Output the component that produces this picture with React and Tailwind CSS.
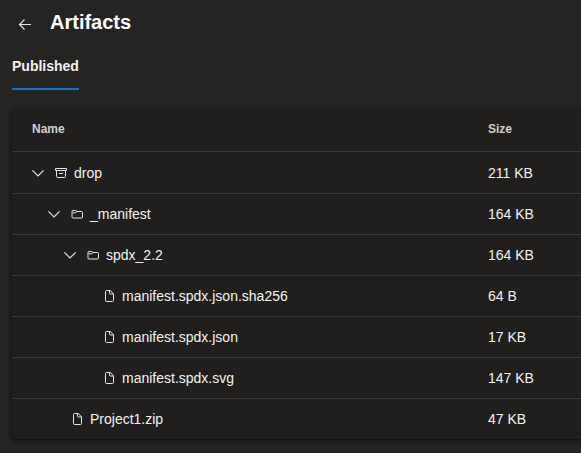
const iconBase = "h-4 w-4 shrink-0";

function BackIcon() {
  return (
    <svg className={iconBase} viewBox="0 0 16 16" fill="none" stroke="#e6e5e4" strokeWidth="1.1" aria-hidden="true">
      <path d="M14 8.500H2.500M7.500 3.500l-5 5 5 5" />
    </svg>
  );
}

function ChevronIcon() {
  return (
    <svg className={iconBase} viewBox="0 0 16 16" fill="none" stroke="#e6e5e4" strokeWidth="1.2" aria-hidden="true">
      <path d="M2.400 5.400 8 11l5.600-5.600" />
    </svg>
  );
}

function ArchiveIcon() {
  return (
    <svg className={iconBase} viewBox="0 0 16 16" fill="none" stroke="#e6e5e4" aria-hidden="true">
      <path d="M2.500 3.500h11v2h-11zM3.500 5.500v6q0 1 1 1h7q1 0 1-1v-6M6 8.500h4" />
    </svg>
  );
}

function FolderIcon() {
  return (
    <svg className={iconBase} viewBox="0 0 16 16" fill="none" stroke="#e6e5e4" aria-hidden="true">
      <path d="M3 5.500q0-1 1-1h2.500l1.500 1h4.500q1 0 1 1v4.500q0 1-1 1h-8.500q-1 0-1-1zM3.500 6.800h3l1.500-1.300" />
    </svg>
  );
}

function FileIcon() {
  return (
    <svg className={iconBase} viewBox="0 0 16 16" fill="none" stroke="#e6e5e4" aria-hidden="true">
      <path d="M5.500 2.500h4l3 3.500v6.500q0 1-1 1h-6q-1 0-1-1v-9q0-1 1-1zM8.500 2.500v2.500q0 1 1 1h3" />
    </svg>
  );
}

const icons = { archive: ArchiveIcon, folder: FolderIcon, file: FileIcon };

const rows = [
  { name: "drop", size: "211 KB", icon: "archive", indent: "pl-[18px]", expandable: true },
  { name: "_manifest", size: "164 KB", icon: "folder", indent: "pl-[34px]", expandable: true },
  { name: "spdx_2.2", size: "164 KB", icon: "folder", indent: "pl-[50px]", expandable: true },
  { name: "manifest.spdx.json.sha256", size: "64 B", icon: "file", indent: "pl-[89px]" },
  { name: "manifest.spdx.json", size: "17 KB", icon: "file", indent: "pl-[89px]" },
  { name: "manifest.spdx.svg", size: "147 KB", icon: "file", indent: "pl-[89px]" },
  { name: "Project1.zip", size: "47 KB", icon: "file", indent: "pl-[57px]" },
];

function Row({ name, size, icon, indent, expandable }) {
  const Icon = icons[icon];
  return (
    <tr className="group h-[41px] border-t border-[#3b3a39] first:h-[42px]">
      <td className="p-0 group-first:pt-px">
        <div className={`flex items-center ${indent}`}>
          {expandable && (
            <button type="button" aria-label={`Collapse ${name}`} aria-expanded="true" className="mr-[7px]">
              <ChevronIcon />
            </button>
          )}
          <Icon />
          <span className="ml-[5px]">{name}</span>
        </div>
      </td>
      <td className="p-0 group-first:pt-px">{size}</td>
    </tr>
  );
}

export default function App() {
  return (
    <main className="min-h-screen bg-[#252423] pl-3 font-['Liberation_Sans',Arial,sans-serif] text-sm text-[#f3f2f1]">
      <header className="flex h-11 items-center gap-[17px] pl-[5px]">
        <button type="button" aria-label="Back" className="pt-1">
          <BackIcon />
        </button>
        <h1 className="text-xl font-bold text-white">Artifacts</h1>
      </header>
      <div role="tablist" className="flex h-[46px]">
        <button type="button" role="tab" aria-selected="true" className="border-b-2 border-[#0078d4] font-bold">
          Published
        </button>
      </div>
      <section className="mt-[17px] rounded-l bg-[#201f1e] shadow-[0_3px_7px_rgba(0,0,0,0.4),0_1px_2px_rgba(0,0,0,0.3)]">
        <table className="w-full table-fixed border-collapse text-left">
          <thead>
            <tr className="h-11 text-xs text-[#d2d0ce]">
              <th scope="col" className="p-0 pl-5 font-bold">Name</th>
              <th scope="col" className="w-[93px] p-0 font-bold">Size</th>
            </tr>
          </thead>
          <tbody>
            {rows.map((row) => (
              <Row key={row.name} {...row} />
            ))}
          </tbody>
        </table>
      </section>
    </main>
  );
}
